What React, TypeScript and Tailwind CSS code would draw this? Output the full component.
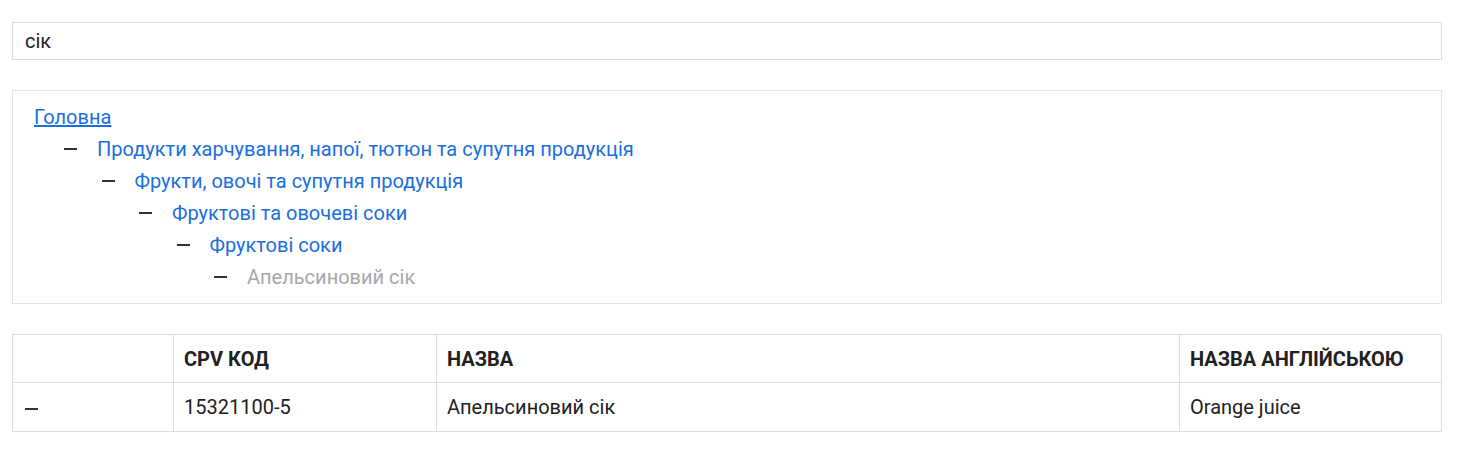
import React from "react";

const crumbs = [
  "Продукти харчування, напої, тютюн та супутня продукція",
  "Фрукти, овочі та супутня продукція",
  "Фруктові та овочеві соки",
  "Фруктові соки",
];

export default function App() {
  return (
    <div className="bg-white min-h-screen pl-3 pr-[28px] pt-[22px] text-[#212121]" style={{ fontFamily: "Roboto, 'Noto Sans', sans-serif" }}>
      <div className="h-[38px] border border-[#dcdcdc] flex items-center px-[12px] text-[20px] text-[#222]">сік</div>
      <div className="mt-[30px] border border-[#e3e3e3] pl-[21px] pt-[10px] pb-[10px] text-[20px]">
        <div className="h-[32px] flex items-center">
          <a href="#" className="text-[#1a6fe0] underline">Головна</a>
        </div>
        {crumbs.map((c, i) => (
          <div key={i} className="h-[32px] flex items-center" style={{ paddingLeft: 30 + i * 37.5 }}>
            <span className="inline-block w-[13px] h-[2px] bg-[#333] mr-[20px]" />
            <a href="#" className="text-[#1a6fe0]">{c}</a>
          </div>
        ))}
        <div className="h-[32px] flex items-center" style={{ paddingLeft: 30 + 4 * 37.5 }}>
          <span className="inline-block w-[13px] h-[2px] bg-[#333] mr-[20px]" />
          <span className="text-[#a8a8a8]">Апельсиновий сік</span>
        </div>
      </div>
      <table className="mt-[30px] w-full border-collapse text-[20px]">
        <thead>
          <tr className="h-[48px]">
            <th className="w-[161px] border border-[#dedede] text-left px-[10px] font-bold"></th>
            <th className="w-[263px] border border-[#dedede] text-left px-[10px] font-bold">CPV КОД</th>
            <th className="border border-[#dedede] text-left px-[10px] font-bold">НАЗВА</th>
            <th className="w-[262px] border border-[#dedede] text-left px-[10px] font-bold">НАЗВА АНГЛІЙСЬКОЮ</th>
          </tr>
        </thead>
        <tbody>
          <tr className="h-[49px]">
            <td className="border border-[#dedede] px-[12px]">
              <span className="inline-block w-[13px] h-[2px] bg-[#333] align-middle" />
            </td>
            <td className="border border-[#dedede] px-[10px]">15321100-5</td>
            <td className="border border-[#dedede] px-[10px]">Апельсиновий сік</td>
            <td className="border border-[#dedede] px-[10px]">Orange juice</td>
          </tr>
        </tbody>
      </table>
    </div>
  );
}
